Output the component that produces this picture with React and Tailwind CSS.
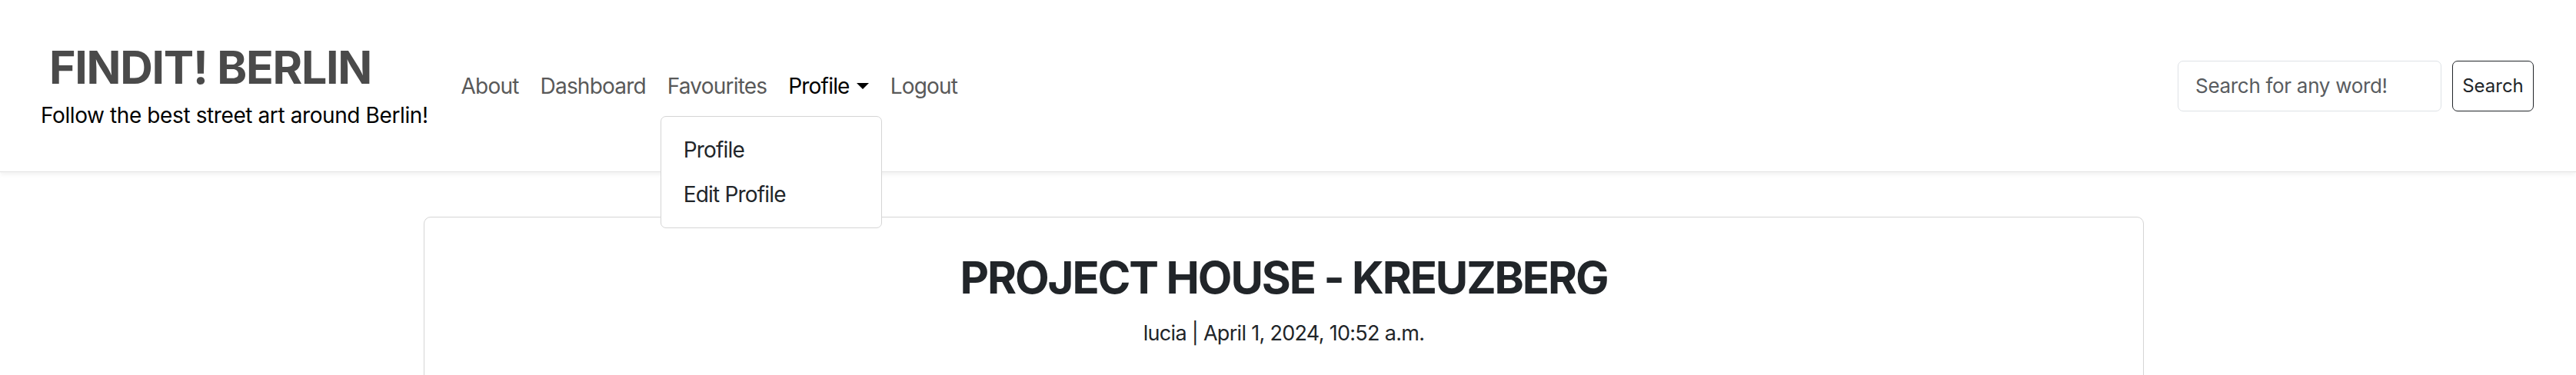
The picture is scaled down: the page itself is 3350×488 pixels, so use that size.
export default function App() {
  const links = ["About", "Dashboard", "Favourites"];
  return (
    <div className="font-['Inter',sans-serif] bg-white min-h-[488px] w-[3350px] overflow-hidden">
      <header className="relative z-10 h-[224px] flex items-center bg-white border-b border-[#e3e3e3] shadow-[0_3px_6px_rgba(0,0,0,0.06)] pl-[53px] pr-[55px]">
        <div className="flex flex-col">
          <div className="pl-[11px] text-[59px] leading-[71px] font-bold text-[#4a4a4a] tracking-[-1.3px]">FINDIT! BERLIN</div>
          <div className="mt-[6px] text-[28px] leading-[42px] text-black tracking-[-0.4px]">Follow the best street art around Berlin!</div>
        </div>
        <ul className="ml-[29px] flex items-center text-[28px] leading-[42px] tracking-[-0.8px]">
          {links.map((l) => (
            <li key={l} className="px-[14px] py-[14px] text-[#595959]">{l}</li>
          ))}
          <li className="relative px-[14px] py-[14px] text-black flex items-center">
            Profile
            <span className="ml-[9px] inline-block w-0 h-0 border-t-[8px] border-t-black border-x-[8px] border-x-transparent"></span>
            <div className="absolute right-[-3px] top-full mt-[4px] w-[288px] bg-white border border-[#d5d5d5] rounded-[7px] py-[14px] text-[#212529]">
              <div className="px-[29px] py-[8px]">Profile</div>
              <div className="px-[29px] py-[8px]">Edit Profile</div>
            </div>
          </li>
          <li className="px-[14px] py-[14px] text-[#595959]">Logout</li>
        </ul>
        <div className="ml-auto flex items-center gap-[14px]">
          <div className="w-[343px] h-[66px] border border-[#dee2e6] rounded-[7px] flex items-center px-[22px] text-[26px] tracking-[-0.3px] text-[#595c60]">Search for any word!</div>
          <div className="w-[106px] h-[66px] border border-[#212529] rounded-[7px] flex items-center justify-center text-[24px] text-[#212529]">Search</div>
        </div>
      </header>
      <div className="pt-[58px] pl-[551px]">
        <div className="w-[2237px] h-[300px] border border-[#d5d5d5] rounded-[9px] pt-[43px] flex flex-col items-center text-[#212529]">
          <h1 className="text-[58px] leading-[70px] font-bold tracking-[-2.1px]">PROJECT HOUSE - KREUZBERG</h1>
          <p className="mt-[17px] text-[27px] leading-[42px] tracking-[-0.7px]">lucia | April 1, 2024, 10:52 a.m.</p>
        </div>
      </div>
    </div>
  );
}
